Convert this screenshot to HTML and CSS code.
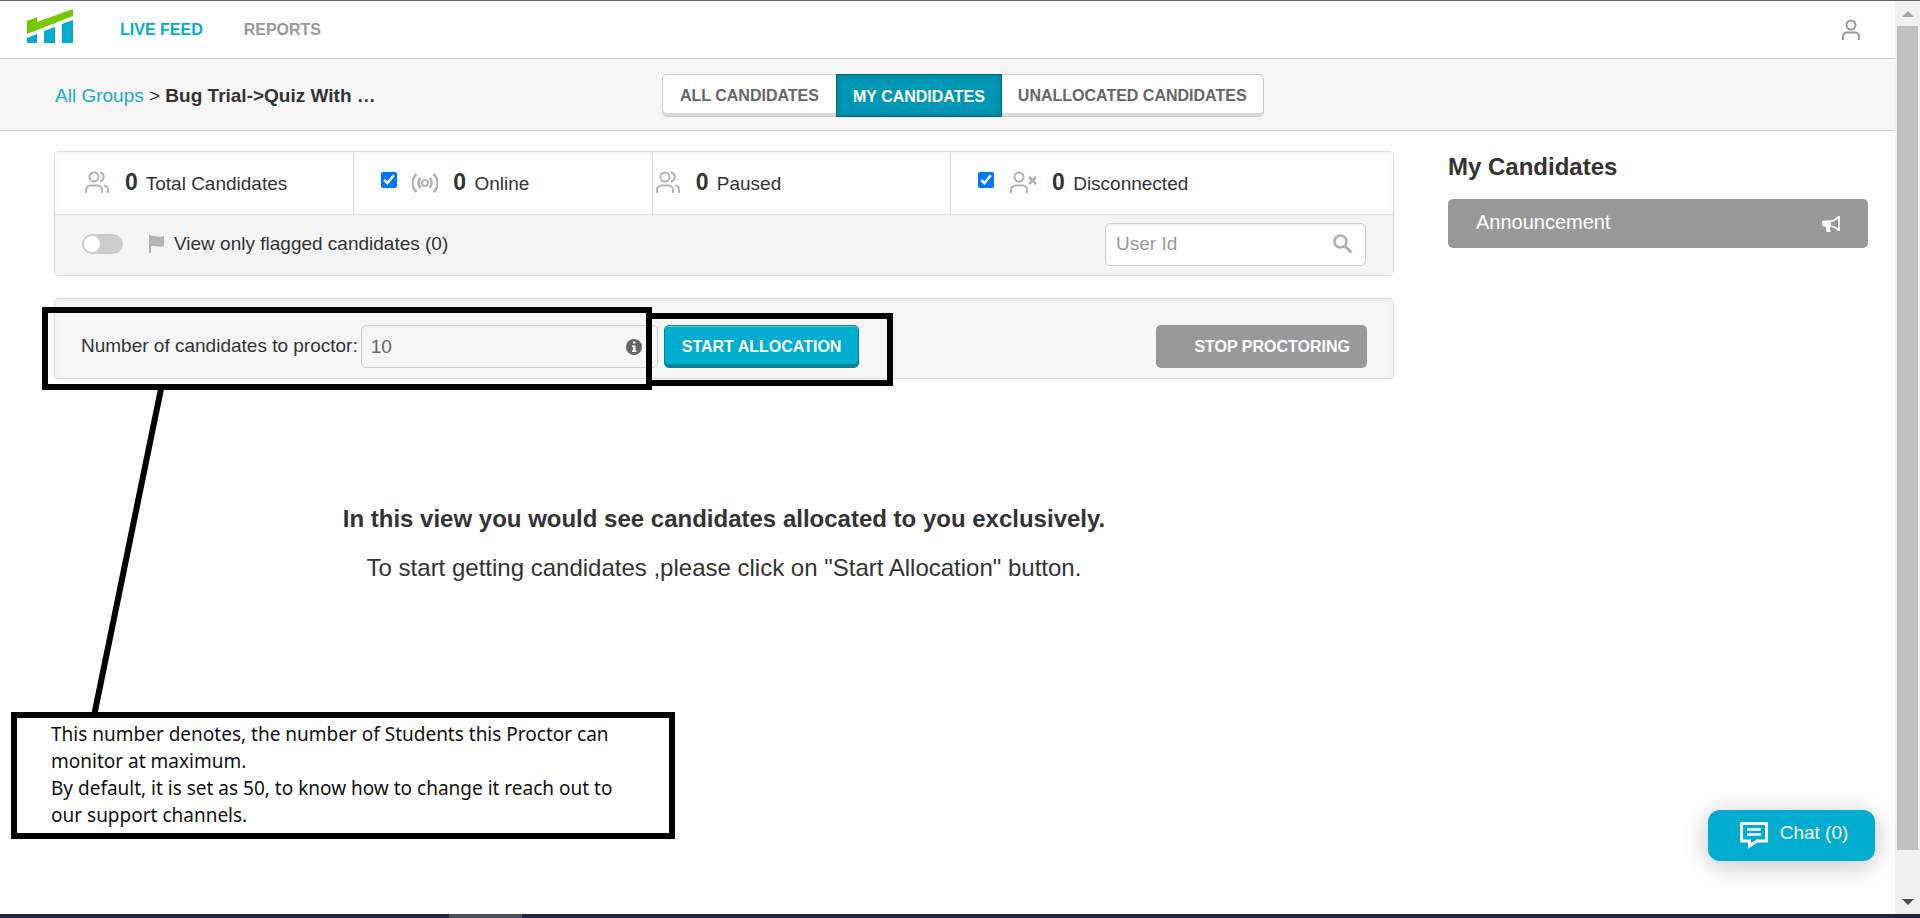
FILE: index.html
```html
<!DOCTYPE html>
<html lang="en">

<head>
    <meta charset="UTF-8">
    <meta name="viewport" content="width=device-width, initial-scale=1.0">
    <title>Live Feed - My Candidates</title>
    <link rel="stylesheet" href="styles.css">
</head>

<body>
    <!-- Shared icon, used by Total and Paused -->
    <svg class="sprite" aria-hidden="true">
        <symbol id="icon-people" viewBox="0 0 26 24">
            <g fill="none" stroke="#b3b3b3" stroke-width="2">
                <circle cx="10" cy="6" r="4.5"/>
                <path d="M2 22v-3a4.500 4.500 0 0 1 4.500-4.500h7a4.500 4.500 0 0 1 4.500 4.500v3"/>
                <path d="M16 1.500a4.600 4.600 0 0 1 0 9M20 14.500a4.500 4.500 0 0 1 4 4.500v3"/>
            </g>
        </symbol>
    </svg>

    <div class="window">
        <div class="page">
            <header class="navbar">
                <a class="logo" href="#" aria-label="Home">
                    <svg width="46" height="34" viewBox="0 0 46 34">
                        <polygon fill="#78c800" points="0,12 10,8 10,13 46,0 46,7 0,25"/>
                        <polygon fill="#00acd0" points="0,29 10,25 10,34 0,34"/>
                        <polygon fill="#00acd0" points="17,22 28,18 28,34 17,34"/>
                        <polygon fill="#00acd0" points="35,15 46,11 46,34 35,34"/>
                    </svg>
                </a>
                <nav class="nav-links">
                    <a class="active" href="#">LIVE FEED</a>
                    <a href="#">REPORTS</a>
                </nav>
                <button class="profile" type="button" aria-label="Profile">
                    <svg width="20" height="22" viewBox="0 0 20 22" fill="none" stroke="#999" stroke-width="2">
                        <circle cx="10" cy="6" r="4.500"/>
                        <path d="M2 21v-3.500a4 4 0 0 1 4-4h8a4 4 0 0 1 4 4V21"/>
                    </svg>
                </button>
            </header>

            <div class="subheader">
                <div class="breadcrumb">
                    <a href="#">All Groups</a> &gt; <strong>Bug Trial-&gt;Quiz With …</strong>
                </div>
                <div class="tabs">
                    <button type="button">ALL CANDIDATES</button>
                    <button type="button" class="selected">MY CANDIDATES</button>
                    <button type="button">UNALLOCATED CANDIDATES</button>
                </div>
            </div>

            <div class="content">
                <main>
                    <section class="card">
                        <div class="stats">
                            <div class="stat">
                                <svg width="26" height="24"><use href="#icon-people"/></svg>
                                <span><b>0</b> Total Candidates</span>
                            </div>
                            <div class="stat">
                                <input type="checkbox" id="online" checked>
                                <svg width="26" height="24" viewBox="0 0 26 24" fill="none" stroke="#b3b3b3" stroke-width="2">
                                    <circle cx="13" cy="12" r="3"/>
                                    <path stroke-width="2.500" d="M8.500 7a7 7 0 0 0 0 10M17.500 7a7 7 0 0 1 0 10M4.500 3a12 12 0 0 0 0 18M21.500 3a12 12 0 0 1 0 18"/>
                                </svg>
                                <label for="online"><b>0</b> Online</label>
                            </div>
                            <div class="stat stat-flush">
                                <svg width="26" height="24"><use href="#icon-people"/></svg>
                                <span><b>0</b> Paused</span>
                            </div>
                            <div class="stat">
                                <input type="checkbox" id="disconnected" checked>
                                <svg width="28" height="24" viewBox="0 0 28 24" fill="none" stroke="#b3b3b3" stroke-width="2">
                                    <circle cx="10" cy="6" r="4.500"/>
                                    <path d="M2 22v-3a4.500 4.500 0 0 1 4.500-4.500h7a4.500 4.500 0 0 1 4.500 4.500v3"/>
                                    <path stroke-width="2.500" d="M20 6l7 7M27 6l-7 7"/>
                                </svg>
                                <label for="disconnected"><b>0</b> Disconnected</label>
                            </div>
                        </div>
                        <div class="filter">
                            <input class="toggle" type="checkbox" id="flagged">
                            <svg width="16" height="18" viewBox="0 0 16 18">
                                <path fill="#b3b3b3" d="M0 0h2v18H0zM2 1c4-1 6 2 13 0v10c-6 2-8-1-13 0z"/>
                            </svg>
                            <label for="flagged">View only flagged candidates (0)</label>
                            <div class="search">
                                <input type="text" placeholder="User Id" aria-label="User Id">
                                <svg width="20" height="20" viewBox="0 0 20 20" fill="none" stroke="#b0b0b0">
                                    <circle cx="7.500" cy="7.500" r="6" stroke-width="2.500"/>
                                    <path stroke-width="3" d="M12 12l6.500 6.500"/>
                                </svg>
                            </div>
                        </div>
                    </section>

                    <section class="card allocation">
                        <label for="limit">Number of candidates to proctor:</label>
                        <div class="limit">
                            <input type="text" id="limit" value="10">
                            <svg width="16" height="16" viewBox="0 0 16 16">
                                <circle cx="8" cy="8" r="8" fill="#666"/>
                                <path fill="#fff" d="M7 2.500h2.500v2H7zM6 6.500h3.500v5h1V13H6v-1.500h1V8H6z"/>
                            </svg>
                        </div>
                        <button type="button" class="btn-start">START ALLOCATION</button>
                        <button type="button" class="btn-stop">STOP PROCTORING</button>
                    </section>

                    <div class="empty">
                        <p><strong>In this view you would see candidates allocated to you exclusively.</strong></p>
                        <p>To start getting candidates ,please click on "Start Allocation" button.</p>
                    </div>
                </main>

                <aside class="sidebar">
                    <h2>My Candidates</h2>
                    <button type="button" class="announcement">
                        <span>Announcement</span>
                        <svg width="18" height="16" viewBox="0 0 18 16">
                            <path fill="#fff" fill-rule="evenodd" d="M2 4.500h5c4 0 7-2 9-4.500h2v15h-2c-2-2-4.500-4-8-4.300l.5 5.300H4.500L3.500 10.500H2A2 2 0 0 1 0 8.500v-2a2 2 0 0 1 2-2zM9 6v3.500c3 .3 5 1.500 7 3V2.500C14 4.500 12 5.500 9 6z"/>
                        </svg>
                    </button>
                </aside>
            </div>

            <button type="button" class="chat">
                <svg width="28" height="27" viewBox="0 0 28 27" fill="none" stroke="#fff" stroke-width="3">
                    <path d="M1.500 1.500h25v17.500H17l-7.500 5v-5h-8z"/>
                    <path stroke-width="2.500" d="M7 7.500h14M7 12.500h14"/>
                </svg>
                <span>Chat (0)</span>
            </button>
        </div>

        <div class="scrollbar">
            <svg width="12" height="6" viewBox="0 0 12 6"><path fill="#a3a3a3" d="M0 6l6-6 6 6z"/></svg>
            <div class="thumb"></div>
            <svg width="12" height="6" viewBox="0 0 12 6"><path fill="#505050" d="M0 0l6 6 6-6z"/></svg>
        </div>
    </div>
    <div class="taskbar"><span></span></div>

    <!-- Annotations over the page -->
    <div class="mark mark-limit"></div>
    <div class="mark mark-start"></div>
    <svg class="pointer" width="80" height="332" viewBox="0 0 80 332">
        <path stroke="#000" stroke-width="6" d="M70 0L2 332"/>
    </svg>
    <div class="mark note">
        This number denotes, the number of Students this Proctor can monitor at maximum.<br>
        By default, it is set as 50, to know how to change it reach out to our support channels.
    </div>
</body>

</html>
```
FILE: styles.css
```css
* {
    box-sizing: border-box;
}

body {
    font-family: "Liberation Sans", Arial, sans-serif;
    font-size: 19px;
    line-height: 24px;
    color: #333;
    background-color: #fff;
    display: flex;
    flex-direction: column;
    min-height: 100vh;
    margin: 0;
    position: relative;
}

a {
    color: #17a9c9;
    text-decoration: none;
}

button,
input {
    font-family: inherit;
    font-size: inherit;
    margin: 0;
}

button {
    font-weight: bold;
    cursor: pointer;
}

svg {
    flex: none;
}

.sprite {
    position: absolute;
    width: 0;
    height: 0;
}

.window {
    flex: 1;
    display: flex;
    border-top: 1px solid #666;
}

.page {
    flex: 1;
    position: relative;
}

/* Top bars */
.navbar {
    display: flex;
    align-items: center;
    height: 58px;
    padding: 0 34px 0 27px;
    border-bottom: 1px solid #ccc;
}

.logo {
    display: flex;
    margin-bottom: 8px;
}

.nav-links {
    flex: 1;
    display: flex;
    gap: 41px;
    margin-left: 47px;
    font-size: 16px;
    font-weight: bold;
}

.nav-links a {
    color: #999;
}

.nav-links .active {
    color: #00acd0;
}

.profile {
    display: flex;
    padding: 0;
    border: none;
    background: none;
}

.subheader {
    display: flex;
    align-items: center;
    height: 72px;
    padding: 2px 55px 0;
    background-color: #f6f6f6;
    border-bottom: 1px solid #ccc;
}

.breadcrumb {
    width: 607px;
}

.tabs {
    display: flex;
}

.tabs button {
    height: 43px;
    padding: 0 17px;
    font-size: 16px;
    color: #666;
    background-color: #fff;
    border: 1px solid #ccc;
    border-width: 1px 0;
    box-shadow: inset 0 -3px #d9d9d9;
}

.tabs button:first-child {
    border-left-width: 1px;
    border-radius: 5px 0 0 5px;
}

.tabs button:last-child {
    padding: 0 16px;
    border-right-width: 1px;
    border-radius: 0 5px 5px 0;
}

.tabs .selected {
    padding: 2px 16px 0;
    color: #fff;
    background-color: #0097b6;
    border: 1px solid #006a80;
    box-shadow: inset 0 0 8px #007c96;
}

/* Main content */
.content {
    display: grid;
    grid-template-columns: 1fr 420px;
    gap: 54px;
    padding: 20px 27px 0 54px;
}

.card {
    background-color: #f6f6f6;
    border: 1px solid #ddd;
    border-radius: 5px;
    margin-bottom: 22px;
    overflow: hidden;
}

.stats {
    display: grid;
    grid-template-columns: repeat(3, 22.3%) 1fr;
    background-color: #fff;
    border-bottom: 1px solid #ddd;
    box-shadow: inset 0 2px 4px #f3f3f3;
}

.stat {
    display: flex;
    align-items: center;
    gap: 15px;
    height: 62px;
    padding-left: 29px;
}

.stat + .stat {
    border-left: 1px solid #ddd;
    padding-left: 27px;
}

.stats .stat-flush {
    padding-left: 2px;
}

.stat input {
    width: 16px;
    height: 16px;
    margin-bottom: 6px;
}

.stat b {
    font-size: 23px;
    margin-right: 3px;
}

.filter {
    display: flex;
    align-items: center;
    height: 60px;
    padding: 0 27px 2px;
    background-color: #f4f4f4;
}

.filter > svg {
    margin: 0 9px 0 26px;
}

.filter > label {
    padding-bottom: 1px;
}

.toggle {
    appearance: none;
    width: 41px;
    height: 20px;
    padding: 2px;
    border-radius: 10px;
    background-color: #ccc;
}

.toggle::before {
    content: "";
    display: block;
    width: 16px;
    height: 16px;
    border-radius: 8px;
    background-color: #fff;
}

.toggle:checked::before {
    margin-left: auto;
}

.search {
    display: flex;
    align-items: center;
    width: 261px;
    height: 43px;
    margin-left: auto;
    padding: 0 12px 0 10px;
    background-color: #fff;
    border: 1px solid #ccc;
    border-radius: 5px;
    box-shadow: inset 0 2px 2px #eee;
}

.search input {
    flex: 1;
    min-width: 0;
    padding: 0;
    border: none;
    outline: none;
    background: none;
}

.search input::placeholder {
    color: #999;
}

.allocation {
    display: flex;
    align-items: center;
    height: 81px;
    padding: 16px 26px 0 26px;
    box-shadow: inset 0 2px 4px #eee;
}

.allocation > label {
    padding-bottom: 2px;
}

.limit {
    display: flex;
    align-items: center;
    width: 297px;
    height: 43px;
    margin: 0 6px 0 3px;
    padding: 0 15px 0 9px;
    border: 1px solid #ccc;
    border-radius: 5px;
    box-shadow: inset 0 2px 2px #eee;
}

.limit input {
    flex: 1;
    min-width: 0;
    padding: 0;
    border: none;
    outline: none;
    background: none;
    color: #666;
}

.btn-start,
.btn-stop {
    height: 43px;
    padding: 0 17px;
    font-size: 16px;
    color: #fff;
    border: none;
    border-radius: 5px;
}

.btn-start {
    background-color: #00acd0;
    border: 1px solid #00819c;
    box-shadow: inset 0 1px #66cde3, inset 0 -3px #00819c;
}

.btn-stop {
    margin-left: auto;
    padding-left: 38px;
    background-color: #999;
}

.empty {
    padding-top: 105px;
    font-size: 24px;
    line-height: 25px;
    text-align: center;
}

.empty p {
    margin: 0 0 24px;
}

/* Right column */
.sidebar h2 {
    margin: 4px 0 20px;
    font-size: 24px;
    line-height: 24px;
}

.announcement {
    display: flex;
    align-items: center;
    justify-content: space-between;
    width: 100%;
    height: 49px;
    padding: 0 28px;
    font-size: 20px;
    font-weight: normal;
    color: #fff;
    background-color: #999;
    border: none;
    border-radius: 5px;
}

.announcement span {
    padding-bottom: 2px;
}

.chat {
    position: absolute;
    right: 20px;
    bottom: 53px;
    display: flex;
    align-items: center;
    justify-content: center;
    gap: 12px;
    width: 167px;
    height: 51px;
    padding: 0 0 0 5px;
    font-weight: normal;
    color: #fff;
    background-color: #00acd0;
    border: none;
    border-radius: 12px;
    box-shadow: 0 4px 24px rgba(0, 0, 0, 0.25);
}

.chat span {
    padding-bottom: 5px;
}

/* Window edges */
.scrollbar {
    display: flex;
    flex-direction: column;
    align-items: center;
    width: 25px;
    padding: 10px 2px 9px;
    background-color: #f1f1f1;
}

.thumb {
    flex: 1;
    width: 100%;
    margin: 9px 0 49px;
    background-color: #c1c1c1;
}

.taskbar {
    height: 4px;
    background-color: #1a2740;
}

.taskbar span {
    display: block;
    width: 73px;
    height: 4px;
    margin-left: 449px;
    background-color: #475166;
}

/* Annotations */
.mark {
    position: absolute;
    border: 6px solid #000;
}

.mark-limit {
    left: 42px;
    top: 307px;
    width: 610px;
    height: 83px;
}

.mark-start {
    left: 646px;
    top: 313px;
    width: 247px;
    height: 73px;
}

.pointer {
    position: absolute;
    left: 92px;
    top: 384px;
}

.note {
    left: 11px;
    top: 712px;
    width: 664px;
    padding: 3px 50px 4px 34px;
    font-family: "Noto Sans", "Open Sans", sans-serif;
    font-size: 19px;
    line-height: 27px;
    color: #111;
    background-color: #fff;
}
```
